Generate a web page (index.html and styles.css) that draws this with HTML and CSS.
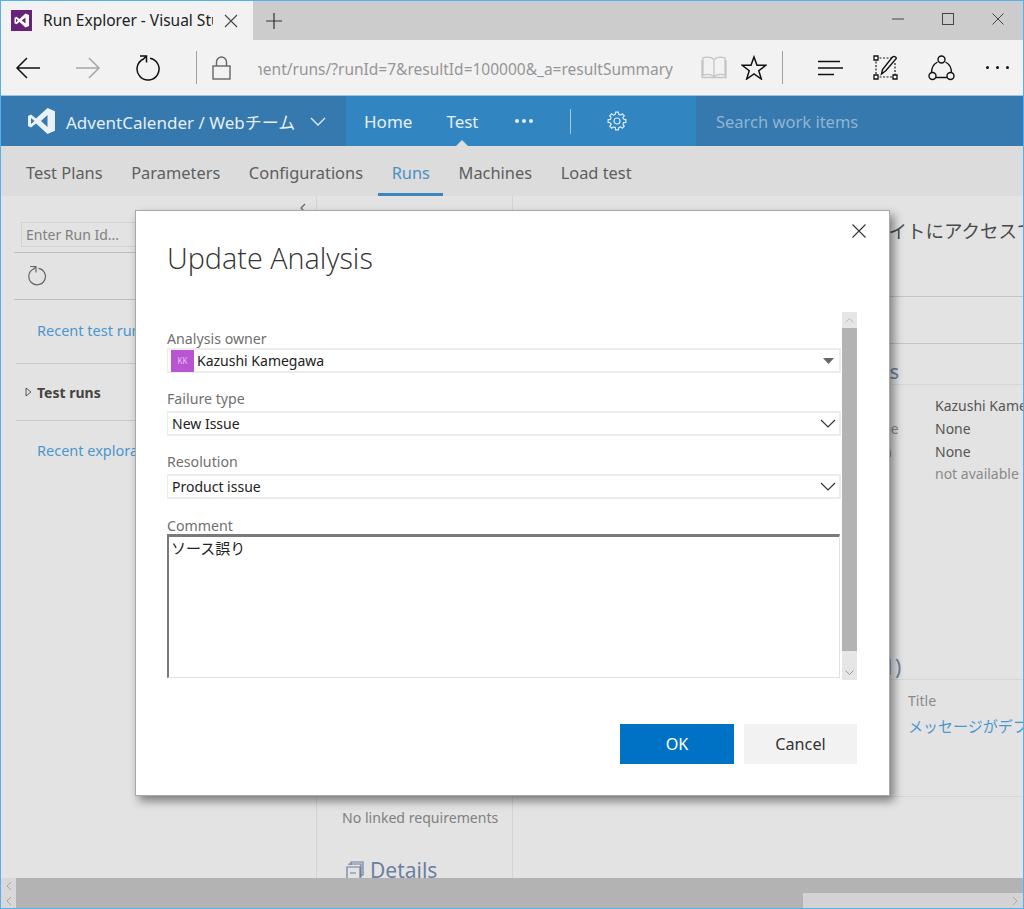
FILE: index.html
```html
<!DOCTYPE html>
<html lang="en">
<head>
<meta charset="utf-8">
<title>Run Explorer</title>
<link rel="stylesheet" href="styles.css">
</head>
<body>
<div class="window">
  <div class="tabbar">
    <div class="tab">
      <svg class="tab-logo" width="21" height="21" viewBox="0 0 21 21"><rect width="21" height="21" fill="#68217a"/><path d="M14.500 3.500 18 5v11l-3.500 1.500L8.500 12l-3 2.300L3.500 13.300V7.700l2-1 3 2.300zM5 8.700v3.600l2-1.800zM14.500 7.500 10.700 10.500l3.800 3z" fill="#fff" fill-rule="evenodd"/></svg>
      <span class="tab-title">Run Explorer - Visual Stu</span>
      <svg class="tab-close" width="14" height="14" viewBox="0 0 14 14"><path d="M1 1l12 12M13 1 1 13" stroke="#444" stroke-width="1.100" fill="none"/></svg>
    </div>
    <svg class="new-tab" width="18" height="18" viewBox="0 0 18 18"><path d="M9 1v16M1 9h16" stroke="#333" stroke-width="1.200" fill="none"/></svg>
    <div class="win-buttons">
      <svg width="12" height="12" viewBox="0 0 12 12"><path d="M0 6h12" stroke="#444" fill="none"/></svg>
      <svg width="12" height="12" viewBox="0 0 12 12"><rect x=".5" y=".5" width="11" height="11" stroke="#444" fill="none"/></svg>
      <svg width="12" height="12" viewBox="0 0 12 12"><path d="M.5.500l11 11M11.500.500l-11 11" stroke="#444" fill="none"/></svg>
    </div>
  </div>
  <div class="toolbar">
    <svg class="tool back" width="26" height="26" viewBox="0 0 26 26"><path d="M25 13H2M12 3 2 13l10 10" stroke="#111" stroke-width="1.500" fill="none"/></svg>
    <svg class="tool forward" width="26" height="26" viewBox="0 0 26 26"><path d="M1 13h23M14 3l10 10-10 10" stroke="#a6a6a6" stroke-width="1.500" fill="none"/></svg>
    <svg class="tool reload" width="26" height="28" viewBox="0 0 26 28"><path d="M8.500 5A11 11 0 1 0 15 4.200M5 2h6.500v6.500M11.500 2 8 5.500" stroke="#111" stroke-width="1.500" fill="none"/></svg>
    <span class="tool-sep"></span>
    <svg class="tool lock" width="19" height="24" viewBox="0 0 19 24"><rect x="1" y="10" width="17" height="13" stroke="#666" stroke-width="1.400" fill="none"/><path d="M4.500 10V6a5 5 0 0 1 10 0v4" stroke="#666" stroke-width="1.400" fill="none"/></svg>
    <div class="url"><span class="url-text">Environment/runs/?runId=7&amp;resultId=100000&amp;_a=resultSummary</span></div>
    <svg class="tool book" width="26" height="23" viewBox="0 0 26 23"><path d="M13 3.500C10 1 5 1 2 1.800V19c3-.8 8-.8 11 1.500 3-2.300 8-2.300 11-1.500V1.800C21 1 16 1 13 3.500zM13 3.500v17M1 4v17.500h24V4" stroke="#c4c4c4" stroke-width="1.300" fill="none"/></svg>
    <svg class="tool star" width="26" height="25" viewBox="0 0 26 25"><path d="M13 2l3 8.300h8.800l-7 5.400 2.500 8.300-7.300-5-7.300 5 2.500-8.300-7-5.400H10z" stroke="#111" stroke-width="1.500" fill="none"/></svg>
    <span class="tool-sep sep2"></span>
    <svg class="tool hub" width="26" height="16" viewBox="0 0 26 16"><path d="M1 1.500h22M1 8h25M1 14.500h16" stroke="#111" stroke-width="1.400" fill="none"/></svg>
    <svg class="tool note" width="25" height="25" viewBox="0 0 25 25"><path d="M3 3h19M3 22h19M3 3v19M22 8v14" stroke="#222" stroke-width="1.200" stroke-dasharray="2 1.500" fill="none"/><path d="M1 1h4v4H1zM20 20h4v4h-4zM1 20h4v4H1z" fill="#fff" stroke="#111" stroke-width="1.300"/><path d="M8.500 19l1-4.500L19.500 2c1-1 4-.5 3.800 1.500L13 15.500z" fill="#f2f2f2" stroke="#111" stroke-width="1.400"/></svg>
    <svg class="tool share" width="27" height="26" viewBox="0 0 27 26"><path d="M9.500 7A12 12 0 0 0 3.500 17.500M17.500 7A12 12 0 0 1 23.500 17.500M8 22.500h11" stroke="#111" stroke-width="1.400" fill="none"/><circle cx="13.500" cy="4.500" r="3.500" stroke="#111" stroke-width="1.400" fill="none"/><circle cx="4.500" cy="21" r="3.500" stroke="#111" stroke-width="1.400" fill="none"/><circle cx="22.500" cy="21" r="3.500" stroke="#111" stroke-width="1.400" fill="none"/></svg>
    <div class="tool more"><i></i><i></i><i></i></div>
  </div>
  <div class="header">
    <div class="project">
      <svg width="27" height="26" viewBox="0 0 27 26"><path d="M19.500 0 27 3.200v19.600L19.500 26 8 15.500l-5 4L0 18V8l3-1.500 5 4zM3 10v6l3.500-3zM19.500 7l-6.500 6 6.500 6z" fill="#eaf1f7" fill-rule="evenodd"/></svg>
      <span class="project-name">AdventCalender / Webチーム</span>
      <svg width="16" height="9" viewBox="0 0 16 9"><path d="M1 1l7 7 7-7" stroke="#e6eef5" stroke-width="1.300" fill="none"/></svg>
    </div>
    <nav class="hubs">
      <span class="hub-link">Home</span>
      <span class="hub-link current">Test</span>
      <div class="hub-more"><i></i><i></i><i></i></div>
      <span class="hub-sep"></span>
      <svg class="gear" width="20" height="20" viewBox="0 0 20 20" fill="none" stroke="#dceaf4" stroke-width="1.200">
        <circle cx="10" cy="10" r="3"/>
        <g id="teeth">
          <path d="M8.355 3.402 8.592 1.111H11.408L11.645 3.402 13.502 4.171"/>
          <path transform="rotate(45 10 10)" d="M8.355 3.402 8.592 1.111H11.408L11.645 3.402 13.502 4.171"/>
          <path transform="rotate(90 10 10)" d="M8.355 3.402 8.592 1.111H11.408L11.645 3.402 13.502 4.171"/>
          <path transform="rotate(135 10 10)" d="M8.355 3.402 8.592 1.111H11.408L11.645 3.402 13.502 4.171"/>
          <path transform="rotate(180 10 10)" d="M8.355 3.402 8.592 1.111H11.408L11.645 3.402 13.502 4.171"/>
          <path transform="rotate(225 10 10)" d="M8.355 3.402 8.592 1.111H11.408L11.645 3.402 13.502 4.171"/>
          <path transform="rotate(270 10 10)" d="M8.355 3.402 8.592 1.111H11.408L11.645 3.402 13.502 4.171"/>
          <path transform="rotate(315 10 10)" d="M8.355 3.402 8.592 1.111H11.408L11.645 3.402 13.502 4.171"/>
        </g>
      </svg>
    </nav>
    <div class="search">Search work items</div>
  </div>
  <nav class="subnav">
    <span class="sub-link">Test Plans</span>
    <span class="sub-link">Parameters</span>
    <span class="sub-link">Configurations</span>
    <span class="sub-link active">Runs</span>
    <span class="sub-link">Machines</span>
    <span class="sub-link">Load test</span>
  </nav>
  <main class="content">
    <aside class="left">
      <svg class="collapse" width="7" height="10" viewBox="0 0 7 10"><path d="M6 1 2 5l4 4" stroke="#666" stroke-width="1.200" fill="none"/></svg>
      <div class="run-input">Enter Run Id...</div>
      <div class="refresh-row">
        <svg width="20" height="21" viewBox="0 0 20 21"><path d="M6.500 4A8.300 8.300 0 1 0 11.500 3.300M3 1.500h6v6M9 1.500 6 4.500" stroke="#666" stroke-width="1.200" fill="none"/></svg>
      </div>
      <div class="left-row link-row"><span class="link">Recent test runs</span></div>
      <div class="left-row tree-row">
        <svg width="7" height="10" viewBox="0 0 7 10"><path d="M1 1l5 4-5 4z" stroke="#555" fill="none"/></svg>
        <b>Test runs</b>
      </div>
      <div class="left-row link-row last"><span class="link">Recent exploratory sessions</span></div>
    </aside>
    <section class="middle">
      <div class="no-req">No linked requirements</div>
      <h2 class="section-head details">
        <svg width="18" height="19" viewBox="0 0 18 19"><path d="M5 4V1h12v13h-3M3 4V3h12v13h-1M1 6h13v12H1zM4 12h6" stroke="#6b7f9e" stroke-width="1.200" fill="none"/></svg>
        Details
      </h2>
    </section>
    <section class="right">
      <div class="result-title">サイトにアクセスできない</div>
      <div class="rule rule-a"></div>
      <div class="rule rule-b"></div>
      <h2 class="section-head analysis">Analysis</h2>
      <dl class="facts">
        <dt>Owner</dt><dd>Kazushi Kamegawa</dd>
        <dt>Failure type</dt><dd>None</dd>
        <dt>Resolution</dt><dd>None</dd>
        <dt>Comment</dt><dd class="muted">not available</dd>
      </dl>
      <h2 class="section-head bugs">Associated bugs (1)</h2>
      <div class="bug-table">
        <div class="bug-head">Title</div>
        <div class="bug-link">メッセージがデフォルトのまま</div>
      </div>
    </section>
  </main>
  <div class="hscroll">
    <div class="arrows"><svg width="8" height="10" viewBox="0 0 8 10"><path d="M6 1 2 5l4 4" stroke="#a8a8a8" fill="none"/></svg><svg width="8" height="10" viewBox="0 0 8 10"><path d="M6 1 2 5l4 4" stroke="#a8a8a8" fill="none"/></svg></div>
    <div class="inner-track"><svg width="8" height="10" viewBox="0 0 8 10"><path d="M2 1l4 4-4 4" stroke="#a8a8a8" fill="none"/></svg></div>
  </div>

  <div class="modal">
    <svg class="modal-close" width="14" height="14" viewBox="0 0 14 14"><path d="M.5.500l13 13M13.500.500l-13 13" stroke="#333" stroke-width="1.100" fill="none"/></svg>
    <h1 class="modal-title">Update Analysis</h1>
    <div class="modal-body">
      <form class="form">
        <div class="group group-owner">
          <label class="label">Analysis owner</label>
          <div class="field">
            <span class="avatar">KK</span>
            <span class="field-text">Kazushi Kamegawa</span>
            <svg class="caret" width="11" height="6" viewBox="0 0 11 6"><path d="M0 0h11L5.500 6z" fill="#666"/></svg>
          </div>
        </div>
        <div class="group">
          <label class="label">Failure type</label>
          <div class="field spaced">
            <span class="field-text">New Issue</span>
            <svg class="chev" width="16" height="9" viewBox="0 0 16 9"><path d="M1 1l7 7 7-7" stroke="#333" stroke-width="1.200" fill="none"/></svg>
          </div>
        </div>
        <div class="group">
          <label class="label">Resolution</label>
          <div class="field spaced">
            <span class="field-text">Product issue</span>
            <svg class="chev" width="16" height="9" viewBox="0 0 16 9"><path d="M1 1l7 7 7-7" stroke="#333" stroke-width="1.200" fill="none"/></svg>
          </div>
        </div>
        <div class="group group-comment">
          <label class="label">Comment</label>
          <div class="comment">ソース誤り</div>
        </div>
      </form>
      <div class="vscroll">
        <div class="vs-btn"><svg width="9" height="5" viewBox="0 0 9 5"><path d="M.5 4.500l4-4 4 4" stroke="#bbb" fill="none"/></svg></div>
        <div class="vs-thumb"></div>
        <div class="vs-btn low"><svg width="9" height="5" viewBox="0 0 9 5"><path d="M.5.500l4 4 4-4" stroke="#999" fill="none"/></svg></div>
      </div>
    </div>
    <div class="modal-actions">
      <button class="btn primary" type="button">OK</button>
      <button class="btn" type="button">Cancel</button>
    </div>
  </div>
</div>
</body>
</html>
```
FILE: styles.css
```css
* { box-sizing: border-box; }
html, body { margin: 0; padding: 0; }
body {
  width: 1024px;
  height: 909px;
  overflow: hidden;
  font-family: "Noto Sans", "Noto Sans CJK JP", sans-serif;
  font-size: 15px;
  color: #333;
}
h1, h2, dl, dd, dt { margin: 0; font-weight: 400; }

.window {
  position: relative;
  width: 1024px;
  height: 909px;
  border: 1px solid #54b0ee;
  display: flex;
  flex-direction: column;
  background: #e3e3e3;
  overflow: hidden;
}

/* Browser chrome */
.tabbar {
  height: 39px;
  flex: none;
  display: flex;
  align-items: center;
  background: #cccccc;
}
.tab {
  width: 252px;
  height: 39px;
  background: #f2f2f2;
  display: flex;
  align-items: center;
  padding-left: 10px;
}
.tab-logo { flex: none; }
.tab-title {
  width: 170px;
  margin-left: 11px;
  padding-bottom: 2px;
  white-space: nowrap;
  overflow: hidden;
  font-size: 15.500px;
  color: #222;
}
.tab-close { margin-left: 11px; flex: none; }
.new-tab { margin-left: 12px; }
.win-buttons {
  margin-left: auto;
  display: flex;
  gap: 38px;
  padding-right: 19px;
  margin-top: -4px;
}
.toolbar {
  height: 56px;
  flex: none;
  display: flex;
  align-items: center;
  background: #f2f2f2;
  border-bottom: 1px solid #9cc5e3;
}
.tool { flex: none; }
.back { margin-left: 14px; }
.forward { margin-left: 34px; }
.reload { margin-left: 34px; }
.tool-sep { width: 1px; height: 33px; background: #a0a0a0; margin-left: 35px; flex: none; }
.lock { margin-left: 15px; }
.url {
  width: 415px;
  margin-left: 27px;
  padding-top: 2px;
  font-size: 15.500px;
  color: #969696;
  white-space: nowrap;
  overflow: hidden;
  display: flex;
  justify-content: flex-end;
}
.url-text { flex: none; }
.book { margin-left: 28px; }
.star { margin-left: 14px; }
.sep2 { margin-left: 15px; }
.hub { margin-left: 34px; }
.note { margin-left: 30px; }
.share { margin-left: 30px; }
.more { margin-left: 31px; display: flex; gap: 7px; }
.more i { width: 3px; height: 3px; border-radius: 50%; background: #111; }

/* Service header */
.header {
  height: 50px;
  flex: none;
  display: flex;
  align-items: center;
  background: #3579ae;
  color: #e6eef5;
}
.project {
  width: 345px;
  display: flex;
  align-items: center;
  padding-left: 27px;
  font-size: 17px;
}
.project-name { margin-left: 11px; white-space: nowrap; width: 244px; }
.hubs {
  position: relative;
  width: 350px;
  height: 50px;
  display: flex;
  align-items: center;
  background: #3186c1;
  padding-left: 18px;
  font-size: 17px;
}
.hub-link { margin-right: 34px; }
.current { position: relative; }
.current::after {
  content: "";
  position: absolute;
  left: 50%;
  bottom: -13px;
  margin-left: -6px;
  border: 6px solid transparent;
  border-top-width: 0;
  border-bottom-color: #dcdcdc;
}
.hub-more { display: flex; gap: 3px; margin-left: 2px; }
.hub-more i { width: 4px; height: 4px; border-radius: 50%; background: #e6eef5; }
.hub-sep { width: 1px; height: 25px; background: #a7c9e1; margin-left: 37px; }
.gear { margin-left: 36px; }
.search {
  padding-left: 20px;
  font-size: 16.500px;
  color: #8fb5d3;
}
.subnav {
  height: 50px;
  flex: none;
  display: flex;
  align-items: stretch;
  background: #dcdcdc;
  padding-left: 11.500px;
  gap: 1.600px;
  font-size: 16.400px;
  color: #5e5e5e;
}
.sub-link {
  padding: 5px 13.500px 0;
  display: flex;
  align-items: center;
  border-bottom: 3px solid transparent;
}
.sub-link.active {
  color: #4a90c2;
  border-bottom-color: #3b87bd;
}

/* Page behind the dialog */
.content {
  flex: 1;
  min-height: 0;
  display: flex;
  overflow: hidden;
}
.left {
  position: relative;
  width: 316px;
  flex: none;
  border-right: 1px solid #d3d3d3;
  padding-top: 26px;
}
.collapse { position: absolute; top: 7px; right: 10px; }
.run-input {
  margin-left: 20px;
  height: 25px;
  width: 200px;
  border: 1px solid #d2d2d2;
  padding-left: 4px;
  font-size: 14px;
  line-height: 23px;
  color: #808080;
}
.refresh-row {
  margin: 5px 0 0 13px;
  height: 48px;
  border-top: 1px solid #bdbdbd;
  border-bottom: 1px solid #bdbdbd;
  display: flex;
  align-items: center;
  padding: 0 0 2px 13px;
}
.left-row { margin-left: 15px; display: flex; align-items: center; white-space: nowrap; }
.link-row { height: 64px; padding: 0 0 4px 21px; border-bottom: 1px solid #c8c8c8; }
.link-row.last { height: 60px; border-bottom: 0; padding-bottom: 3px; }
.tree-row { height: 57px; border-bottom: 1px solid #c8c8c8; padding-left: 9px; gap: 5px; color: #444; font-size: 14px; }
.tree-row b { font-weight: 700; }
.link { color: #4a96cf; font-size: 14.500px; }

.middle {
  width: 196px;
  flex: none;
  border-right: 1px solid #d3d3d3;
  display: flex;
  flex-direction: column;
  justify-content: flex-end;
  padding-left: 25px;
  white-space: nowrap;
}
.no-req { font-size: 14.100px; color: #808080; margin-bottom: 29px; }
.section-head {
  font-size: 21px;
  color: #6b7f9e;
  white-space: nowrap;
}
.details {
  display: flex;
  align-items: center;
  gap: 6px;
  height: 28px;
  margin: 0 0 -6px 4px;
}
.right {
  flex: 1;
  min-width: 0;
  overflow: hidden;
  white-space: nowrap;
  padding-top: 22px;
}
.result-title { padding-left: 357px; font-size: 18.500px; color: #4a4a4a; line-height: 26px; }
.rule { height: 1px; background: #c3c3c3; }
.rule-a { margin-top: 52px; }
.rule-b { margin-top: 46px; }
.analysis {
  margin-top: 12px;
  padding: 2px 0 0 310px;
  font-size: 20px;
  line-height: 28px;
  height: 29px;
  border-bottom: 1px solid #d6d6d6;
}
.facts {
  display: grid;
  grid-template-columns: 113px 1fr;
  padding: 10.200px 0 0 309px;
  font-size: 14px;
  line-height: 22.700px;
  color: #555;
}
.facts dt { color: #8a8a8a; }
.muted { color: #8a8a8a; }
.bugs {
  margin-top: 165px;
  padding: 2px 0 0 198px;
  line-height: 28px;
  height: 29px;
  border-bottom: 1px solid #d6d6d6;
}
.bug-table {
  padding: 10px 0 0 395px;
  height: 117px;
  border-bottom: 1px solid #d6d6d6;
}
.bug-head { font-size: 14.100px; color: #8a8a8a; line-height: 22px; }
.bug-link { font-size: 15px; color: #4a96cf; line-height: 28px; }

.hscroll {
  height: 30px;
  flex: none;
  display: flex;
  justify-content: space-between;
  align-items: flex-end;
  background: #b3b3b3;
}
.arrows {
  width: 15px;
  height: 30px;
  background: #d8d8d8;
  display: flex;
  flex-direction: column;
  align-items: center;
  justify-content: space-around;
}
.inner-track {
  width: 220px;
  height: 15px;
  background: #d3d3d3;
  display: flex;
  justify-content: flex-end;
  align-items: center;
  padding-right: 4px;
}

/* Dialog */
.modal {
  position: absolute;
  left: 134px;
  top: 209px;
  width: 755px;
  height: 586px;
  background: #fff;
  border: 1px solid #a8a8a8;
  box-shadow: 4px 5px 9px rgba(0, 0, 0, .45);
  padding: 0 32px 0 31px;
}
.modal-close { position: absolute; top: 13px; right: 23px; }
.modal-title {
  margin-top: 27px;
  font-family: "Open Sans", "Noto Sans", sans-serif;
  font-size: 28.800px;
  font-weight: 300;
  line-height: 40px;
  color: #333;
}
.modal-body {
  margin-top: 34px;
  height: 368px;
  display: flex;
}
.form { width: 675px; flex: none; padding: 18px 1px 0 0; }
.group { margin-bottom: 17px; }
.group-comment { margin: 17px 0 0; }
.label { display: block; height: 18px; line-height: 18px; font-size: 14.200px; color: #707070; }
.group-comment .label { line-height: 20px; }
.field {
  height: 25px;
  border: 2px solid #ececec;
  border-width: 2px 2px 2px 1px;
  display: flex;
  align-items: center;
  justify-content: space-between;
  padding: 0 3px 0 4px;
  font-size: 14px;
  color: #222;
}
.spaced { margin-top: 3px; }
.group-owner .field { justify-content: flex-start; padding-left: 3px; padding-right: 5px; }
.group-owner .caret { margin-left: auto; }
.avatar {
  width: 23px;
  height: 22px;
  background: #b955d2;
  color: #e7c4f0;
  font-size: 8px;
  display: flex;
  align-items: center;
  justify-content: center;
  margin-right: 3px;
}
.comment {
  height: 144px;
  width: 673px;
  border-style: solid;
  border-color: #7a7a7a #e2e2e2 #e2e2e2 #7a7a7a;
  border-width: 3px 1px 1px 2px;
  padding: 0 2px;
  font-size: 15px;
  color: #222;
}
.vscroll {
  width: 15px;
  height: 368px;
  flex: none;
  display: flex;
  flex-direction: column;
  background: #e6e6e6;
}
.vs-btn { height: 16px; display: flex; align-items: center; justify-content: center; }
.vs-btn.low { height: 29px; align-items: flex-end; padding-bottom: 5px; }
.vs-thumb { flex: 1; background: #b3b3b3; }
.modal-actions {
  margin-top: 44px;
  display: flex;
  justify-content: flex-end;
  gap: 10px;
}
.btn {
  width: 113px;
  height: 40px;
  border: 0;
  background: #f2f2f2;
  font: inherit;
  font-size: 16.200px;
  color: #333;
  padding: 0 0 1px;
}
.btn.primary { width: 114px; background: #0072c6; color: #fff; }
```
